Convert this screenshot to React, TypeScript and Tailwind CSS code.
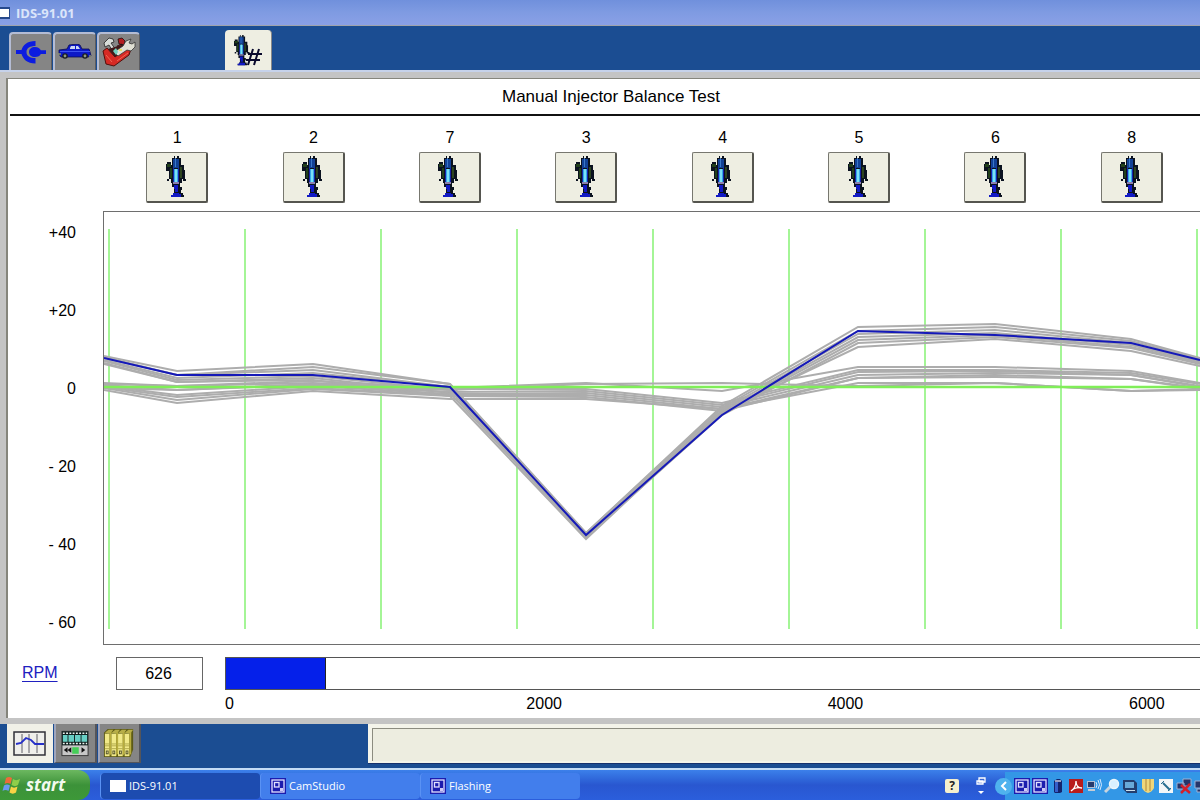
import React from "react";

const cylinders = [1, 2, 7, 3, 4, 5, 6, 8];
const axisLabels = ["+40", "+20", "0", "- 20", "- 40", "- 60"];
const rpmScale = [0, 2000, 4000, 6000];
const rpm = 626;
const rpmMax = 6080;

const sampleX = [0, 73, 209, 346, 482, 618, 754, 891, 1027, 1096];
const gridX = [5, 141, 277, 413, 549, 685, 821, 957, 1093];

const currentTrace = [146, 163, 163, 175, 323, 203, 119, 123, 131, 148];

const upperTraces = [
  [144, 159, 152, 172, 321, 194, 115, 112, 127, 146],
  [145, 163, 155, 172, 321, 196, 119, 115, 129, 147],
  [146, 163, 158, 175, 323, 198, 122, 118, 131, 149],
  [148, 166, 161, 175, 323, 200, 125, 121, 133, 150],
  [149, 168, 164, 178, 325, 201, 128, 123, 135, 151],
  [151, 170, 166, 181, 325, 203, 131, 125, 136, 152],
  [152, 170, 168, 184, 327, 200, 135, 127, 139, 154],
];

const lowerTraces = [
  [171, 174, 169, 176, 171, 179, 155, 155, 159, 171],
  [172, 174, 171, 177, 177, 191, 158, 158, 161, 172],
  [173, 178, 173, 180, 179, 193, 160, 159, 163, 174],
  [174, 183, 174, 182, 181, 195, 163, 161, 163, 175],
  [175, 185, 176, 183, 183, 197, 166, 163, 167, 176],
  [176, 188, 177, 184, 185, 199, 166, 165, 167, 177],
  [178, 191, 179, 187, 187, 197, 171, 171, 179, 178],
  [176, 178, 172, 178, 172, 171, 174, 171, 179, 177],
];

const toPoints = (trace: number[]) => trace.map((y, i) => `${sampleX[i]},${y}`).join(" ");

function InjectorShape() {
  return (
    <g>
      <path d="M6 2h2V0h1v2h2V0h2v2h2v7h3v5h1v9h2v2h-4v-2h-1v4h-2v4h2v3h-1v3h2v2h1v2H5v-2h2v-2h1v-6H6v-4H5v-4H3v2H1v-2h2v-8H0V8h1V6h4v3h1z" fill="#0b1220" />
      <path d="M1 8h4v3H1zM4 12h2v10H4z" fill="#22401a" />
      <path d="M14 11h2v11h-2z" fill="#2d4420" />
      <path d="M7 3h6v9H7z" fill="#124196" />
      <path d="M9 2h1v9H9z" fill="#3a77c8" />
      <path d="M7 12h1v15H7zM12 12h1v15h-1z" fill="#1722a8" />
      <path d="M8 13h4v13H8z" fill="#35a9e8" />
      <path d="M9 13h2v13H9z" fill="#7ce0f6" />
      <path d="M7 26h6v2H7z" fill="#8b7fb0" />
      <path d="M8 29h4v4H8zM9 33h3v3H9zM7 37h6v1h2v3H5v-2h2z" fill="#1119c4" />
    </g>
  );
}

function InjectorIcon() {
  return (
    <svg viewBox="0 0 20 42" className="h-[42px] w-5" aria-hidden="true">
      <InjectorShape />
    </svg>
  );
}

function InjectorNumberIcon() {
  return (
    <svg viewBox="0 0 30 32" className="h-8 w-[30px]" aria-hidden="true">
      <g transform="translate(1 1) scale(0.74)">
        <InjectorShape />
      </g>
      <path d="M20 15l-5 16M26 15l-5 16M15 20h14M13 26h14" fill="none" stroke="#08082c" strokeWidth="2" />
    </svg>
  );
}

function ConnectIcon() {
  return (
    <svg viewBox="0 0 30 24" className="h-6 w-[30px]" aria-hidden="true">
      <path d="M0 10h5.500C7 5 11 1 19.500 1v5C14 6 10.500 8 10.500 12S14 18 19.500 18v5.500C11 23.500 7 19 5.500 14H0z" fill="#0c1ce0" />
      <path d="M19 7c3 0 5 1.500 5.800 3.200H30v3.800h-5.200C24 16 22 17 19 17c-3.500 0-6-2-6-5s2.500-5 6-5z" fill="#0c1ce0" />
    </svg>
  );
}

function CarIcon() {
  return (
    <svg viewBox="0 0 34 16" className="h-4 w-[34px]" aria-hidden="true">
      <path d="M1 6l8-1 2-4 8-1 3 1 2 4h7l1 3 1 4-3 1H3l-2-3z" fill="#0d19c8" stroke="#0a0a50" strokeWidth=".8" />
      <path d="M12 4l1-2h4v3h-5zM18 2h2l2 3h-4z" fill="#cdd7f4" />
      <path d="M2 7.500h30" stroke="#3d52f0" />
      <circle cx="7" cy="12" r="2.800" fill="#1a1c20" />
      <circle cx="7" cy="12" r="1.400" fill="#8f9a80" />
      <circle cx="27" cy="12" r="2.800" fill="#1a1c20" />
      <circle cx="27" cy="12" r="1.400" fill="#8f9a80" />
      <path d="M0 10h3M31 12h2" stroke="#8a9470" strokeWidth="1.500" />
    </svg>
  );
}

function ToolboxIcon() {
  return (
    <svg viewBox="0 0 34 30" className="h-[30px] w-[34px]" aria-hidden="true">
      <path d="M2 6l5-5 4 1 1 3-3 1 7 10-3 2L7 8l-4 2z" fill="#d8dcd8" stroke="#222" strokeWidth=".8" />
      <path d="M16 2l4-1 3 3-1 4-5-1zM15 9l5-2 3 5-4 4z" fill="#b31e20" stroke="#221010" strokeWidth=".8" />
      <path d="M1 14l4-3 8 9 15-11 1 3-2 6-15 11-8-2z" fill="#d62a24" stroke="#55100c" />
      <path d="M6 12l7 8 14-10-4-3z" fill="#401818" />
      <path d="M12 15l9-6 3-5 5-2-2 4 3 1 3-2v5l-4 4-4-1-9 6z" fill="#dfdfd4" stroke="#333" strokeWidth=".8" />
      <path d="M11 14l3-3 2 4-2 3z" fill="#70cfc0" />
      <path d="M17 12h3v2h-3z" fill="#e7df62" />
      <path d="M4 18l6 7M15 24l11-8" stroke="#f06654" />
    </svg>
  );
}

function GraphIcon() {
  return (
    <svg viewBox="0 0 34 26" className="h-[26px] w-[34px]" aria-hidden="true">
      <rect x="1" y="1" width="31" height="23" fill="#efefeb" stroke="#303038" strokeWidth="1.500" />
      <path d="M9 3v19M16 3v19M24 3v19" stroke="#606068" />
      <path d="M3 13l5-1 5-5 5 2 4 4h9" fill="none" stroke="#2630c8" strokeWidth="1.800" />
    </svg>
  );
}

function FilmIcon() {
  return (
    <svg viewBox="0 0 30 28" className="h-[27px] w-7" aria-hidden="true">
      <rect x="1" y="1" width="28" height="26" fill="#c7c7c7" stroke="#333" />
      <path d="M1 1h28v15H1z" fill="#10201f" />
      <path d="M2 3h26M2 14h26" stroke="#edf5f1" strokeWidth="1.800" strokeDasharray="2 1.500" />
      <path d="M2 5h5v7H2zM8 5h6v7H8zM15 5h6v7h-6zM22 5h6v7h-6z" fill="#67cfc4" />
      <path d="M7 18v6l-4-3zM11 18v6l-4-3zM22 18v6l4-3z" fill="#111" />
      <rect x="12" y="18" width="7" height="7" fill="#45ce58" />
    </svg>
  );
}

function BinderIcon() {
  return (
    <svg viewBox="0 0 34 32" className="h-8 w-8" aria-hidden="true">
      <path d="M1 5l4-4h27v22l-3 8H1z" fill="#5c5a16" />
      {[0, 1, 2, 3].map((n) => (
        <g key={n} transform={`translate(${n * 7} 0)`}>
          <path d="M2 5l4-3h5L8 6z" fill="#b7ae48" />
          <path d="M2 6h5v24H2z" fill="#f1e988" />
          <path d="M7 6l2-2v23l-2 3z" fill="#b8ad3d" />
          <path d="M2 17h5M2 19h5M2 22h5" stroke="#b0a74a" />
          <path d="M3 24h3v4H3z" fill="#55542f" />
          <path d="M4 25h1v2H4z" fill="#f1e988" />
        </g>
      ))}
    </svg>
  );
}

function WindowsFlag() {
  return (
    <svg viewBox="0 0 20 18" className="h-[18px] w-5" aria-hidden="true">
      <path d="M4 2c2-1.500 4-1.500 6 0L8.500 8c-2-1.500-4-1.500-6 0z" fill="#ee6a3a" />
      <path d="M11 3c2 1.500 4 1.500 7 0l-2 6c-2 1.500-4 1.500-6.500 0z" fill="#8fce4a" />
      <path d="M2 9.500c2-1.500 4-1.500 6 0L6.500 15c-2-1.500-4-1.500-6 0z" fill="#6b9af0" />
      <path d="M9 10.500c2 1.500 4 1.500 6.500 0l-1.500 6c-2 1.500-4.500 1.500-6.500 0z" fill="#f8d345" />
    </svg>
  );
}

function CamIcon() {
  return (
    <svg viewBox="0 0 16 16" className="size-4 shrink-0" aria-hidden="true">
      <rect width="16" height="16" fill="#1c1cae" />
      <rect x="2" y="2" width="12" height="12" fill="none" stroke="#e3e1ff" strokeWidth="1.300" />
      <rect x="4.500" y="4.500" width="4.500" height="4.500" fill="none" stroke="#e3e1ff" strokeWidth="1.300" />
      <path d="M10 10h3v3h-3z" fill="#cfcaf8" />
    </svg>
  );
}

const trayGlyphs: { name: string; art: React.ReactNode }[] = [
  {
    name: "Battery",
    art: (
      <>
        <path d="M4 3l3-2h3l2 2v11l-2 1H5l-1-1z" fill="#14246e" />
        <path d="M5 4h3v10H5z" fill="#365fc9" />
        <path d="M5 2h6v2H5z" fill="#9b9fc0" />
      </>
    ),
  },
  {
    name: "Reader",
    art: (
      <>
        <path d="M1 1h14v14H1z" fill="#b81c1c" />
        <path d="M3 13c3-2 5-6 5-10 0 5 2 7 6 7-5-1-8 0-11 3z" fill="none" stroke="#fff" strokeWidth="1.300" />
      </>
    ),
  },
  {
    name: "Wireless",
    art: (
      <>
        <path d="M1 3h8v7H1z" fill="#b4bfd3" />
        <path d="M2 4h6v5H2z" fill="#273a6d" />
        <path d="M2 11h7v2H2z" fill="#c8ccd4" />
        <path d="M10 4q2 3 0 6M12 2q3 5 0 9M14 1q3 6 0 11" fill="none" stroke="#d9eaff" />
      </>
    ),
  },
  {
    name: "Search",
    art: (
      <>
        <path d="M1 14l5-5" stroke="#c9d4dd" strokeWidth="3" />
        <circle cx="10" cy="6" r="4.500" fill="#d8f0ff" stroke="#edf6fa" strokeWidth="1.500" />
      </>
    ),
  },
  {
    name: "Display",
    art: (
      <>
        <path d="M1 2h11l3 3v10H5l-4-4z" fill="#233e6e" />
        <path d="M3 4h9v6H3z" fill="#69a9d8" />
        <path d="M4 12h9v1H4z" fill="#cfe0ec" />
      </>
    ),
  },
  {
    name: "Shield",
    art: (
      <>
        <path d="M2 1h12v9q-2 4-6 5-4-1-6-5z" fill="#efd67a" />
        <path d="M6 1v12M10 1v12" stroke="#b0863a" />
      </>
    ),
  },
  {
    name: "Tools",
    art: (
      <>
        <path d="M1 1h14v14H1z" fill="#f3f6f8" />
        <path d="M5 5l7 7" stroke="#276d91" strokeWidth="2" />
        <path d="M3 6l3-3M10 13l3-3" stroke="#276d91" />
      </>
    ),
  },
  {
    name: "Network disconnected",
    art: (
      <>
        <path d="M1 5h7v6H1zM7 1h8v7H7z" fill="#25356b" stroke="#9eb0d4" />
        <path d="M5 7l9 8M14 6l-9 9" stroke="#d3202c" strokeWidth="2.500" />
      </>
    ),
  },
  {
    name: "Network",
    art: <path d="M1 3h9v7H1zM3 11h9v3H3z" fill="#25356b" stroke="#9eb0d4" />,
  },
];

const grayTab =
  "flex h-[38px] w-[43px] items-center justify-center rounded-t border-l-2 border-t-2 border-r border-l-[#b4bcd4] border-t-[#b4bcd4] border-r-[#5c5c60] bg-[#858585]";
const lowerTab =
  "flex h-[39px] w-[43px] items-center justify-center border-l-2 border-r-2 border-b border-l-[#a0a6bc] border-r-[#55555a] border-b-[#55555a] bg-[#858585] pr-0.5";
const taskButton =
  "flex h-[26px] w-40 items-center gap-[3px] rounded-sm border-l border-[#5a92f4] pl-[9px] text-[11px] text-white";

export default function App() {
  return (
    <div className="flex min-h-screen flex-col overflow-x-hidden bg-[#c4c4c4] font-['Liberation_Sans',Arial,sans-serif] text-base leading-5 text-black">
      <header>
        <div className="flex h-[26px] items-center gap-1.5 border-b border-[#a0a4ac] bg-linear-to-b from-[#7090dc] via-[#7f9be2] to-[#8aa0e6]">
          <span className="h-3 w-2.5 border-y-2 border-r border-[#26498c] bg-white" />
          <h1 className="font-['Open_Sans','Noto_Sans',sans-serif] text-[13px] leading-4 font-bold text-[#dbe5fa]">IDS-91.01</h1>
        </div>
        <nav className="flex h-[46px] items-end border-b-2 border-[#c6d2ea] bg-[#1b4d92] pl-[9px]" aria-label="Tools">
          <div className="flex gap-px">
            <button type="button" aria-label="Connection" className={grayTab}><ConnectIcon /></button>
            <button type="button" aria-label="Vehicle" className={grayTab}><CarIcon /></button>
            <button type="button" aria-label="Toolbox" className={grayTab}><ToolboxIcon /></button>
          </div>
          <button
            type="button"
            aria-label="Injector balance"
            className="ml-[85px] flex h-10 w-[47px] items-center justify-center rounded-t border-r border-[#888] bg-[#eeeee2]"
          >
            <InjectorNumberIcon />
          </button>
        </nav>
      </header>

      <main className="mt-1.5 mb-1.5 ml-1.5 flex flex-1 flex-col border-t border-l-2 border-[#85857c] bg-white">
        <h2 className="flex h-[35px] items-center justify-center pl-3.5 text-[17px]">Manual Injector Balance Test</h2>
        <div className="ml-0.5 h-0.5 bg-[#111]" />

        <div className="grid grid-cols-8 pt-3 pb-2 pl-[101px]">
          {cylinders.map((n) => (
            <div key={n} className="flex flex-col items-center gap-1">
              <span id={`cylinder-${n}`}>{n}</span>
              <button
                type="button"
                aria-labelledby={`cylinder-${n}`}
                className="flex h-[51px] w-[62px] items-center justify-center rounded-xs border-t border-r-2 border-b-2 border-l border-t-[#77776f] border-r-[#55554f] border-b-[#55554f] border-l-[#77776f] bg-[#eeeee2] pr-0.5"
              >
                <InjectorIcon />
              </button>
            </div>
          ))}
        </div>

        <div className="flex flex-1">
          <div className="flex w-[95px] shrink-0 flex-col justify-between py-3 pr-[27px] text-right">
            {axisLabels.map((label) => (
              <span key={label}>{label}</span>
            ))}
          </div>
          <div className="flex min-h-[300px] flex-1 border-y border-l border-[#6e6e6e]">
            <svg viewBox="0 0 1096 432" preserveAspectRatio="none" className="h-auto w-full flex-1" role="img" aria-label="Injector balance traces">
              {gridX.map((x) => (
                <path key={x} d={`M${x} 17V417`} stroke="#a4f596" strokeWidth="2" />
              ))}
              <g fill="none" stroke="#adadad" strokeWidth="2">
                {[...upperTraces, ...lowerTraces].map((trace, i) => (
                  <polyline key={i} points={toPoints(trace)} />
                ))}
              </g>
              <path d="M0 175H1096" stroke="#80ee58" strokeWidth="2.500" />
              <polyline points={toPoints(currentTrace)} fill="none" stroke="#1519b8" strokeWidth="2" />
            </svg>
          </div>
        </div>

        <section className="flex pt-3 pb-1 pl-3.5">
          <a href="#rpm" className="mt-1.5 w-[94px] text-[#2020c0] underline underline-offset-3">RPM</a>
          <output id="rpm" className="flex h-[33px] w-[87px] items-center justify-center border border-[#666] pr-0.5">{rpm}</output>
          <div className="ml-[22px] flex-1">
            <div
              role="progressbar"
              aria-label="RPM"
              aria-valuenow={rpm}
              aria-valuemin={0}
              aria-valuemax={rpmMax}
              className="h-[33px] border-y border-l border-[#555]"
            >
              <div className="h-full border-r border-[#222] bg-[#0520ea]" style={{ width: `${(rpm / rpmMax) * 100}%` }} />
            </div>
            <div className="mt-1 flex justify-between pr-[35px]">
              {rpmScale.map((v) => (
                <span key={v} className="w-9">{v}</span>
              ))}
            </div>
          </div>
        </section>
      </main>

      <nav className="flex h-11 items-start bg-[#1b4d92] pl-[7px]" aria-label="Views">
        <div className="flex w-[361px] shrink-0 gap-px">
          <button type="button" aria-label="Graph view" className="flex h-[39px] w-[46px] items-center justify-center bg-[#f1f1e8]"><GraphIcon /></button>
          <button type="button" aria-label="Recordings" className={lowerTab}><FilmIcon /></button>
          <button type="button" aria-label="Library" className={lowerTab}><BinderIcon /></button>
        </div>
        <div className="h-10 flex-1 border-b border-[#16306c] bg-[#f4f4ea] pt-1 pb-0.5 pl-1">
          <div className="h-full border-t border-l border-[#8c8c80] bg-[#edede0]" />
        </div>
      </nav>

      <footer className="flex h-8 items-stretch border-t-2 border-[#c4dcf6] bg-linear-to-b from-[#3c80ea] via-[#2957d0] to-[#2b5edc] font-['Open_Sans','Noto_Sans',sans-serif]">
        <button
          type="button"
          className="flex w-[90px] items-center gap-1 rounded-r-xl bg-linear-to-b from-[#6cb860] via-[#3c9239] to-[#3d9838] pl-0.5 text-[17px] font-bold text-[#f3faee] italic"
        >
          <WindowsFlag />
          start
        </button>
        <div className="ml-2.5 flex items-end pb-px">
          <button type="button" className={`${taskButton} bg-[#1d4cb0]`}>
            <span className="h-3 w-4 bg-white" />
            IDS-91.01
          </button>
          <button type="button" className={`${taskButton} bg-[#427eec]`}><CamIcon />CamStudio</button>
          <button type="button" className={`${taskButton} bg-[#427eec]`}><CamIcon />Flashing</button>
        </div>
        <div className="ml-auto flex shrink-0 items-center pt-0.5">
          <button type="button" aria-label="Help" className="mr-4 flex size-3.5 items-center justify-center rounded-xs bg-[#f5efcd] text-[12px] leading-none font-bold text-[#222]">?</button>
          <svg viewBox="0 0 12 18" className="mr-2 h-[18px] w-3" aria-hidden="true">
            <path d="M4 1h6v4H4zM2 4h6v3H2z" fill="#3a67d4" stroke="#fff" strokeWidth="1.300" />
            <path d="M3 14h6l-3 3z" fill="#fff" />
          </svg>
          <div className="flex w-[205px] items-center self-stretch overflow-hidden bg-linear-to-r from-transparent from-5% to-[#3397e6] to-5%">
            <button type="button" aria-label="Show hidden icons" className="flex size-[17px] shrink-0 items-center justify-center rounded-full bg-[#4fb2ee]">
              <svg viewBox="0 0 10 10" className="size-2.5" aria-hidden="true">
                <path d="M7 1L3 5l4 4" fill="none" stroke="#fff" strokeWidth="2" />
              </svg>
            </button>
            <div className="ml-0.5 flex shrink-0 gap-0.5">
              <CamIcon />
              <CamIcon />
              {trayGlyphs.map((glyph) => (
                <svg key={glyph.name} viewBox="0 0 16 16" className="size-4" role="img" aria-label={glyph.name}>
                  {glyph.art}
                </svg>
              ))}
            </div>
          </div>
        </div>
      </footer>
    </div>
  );
}
